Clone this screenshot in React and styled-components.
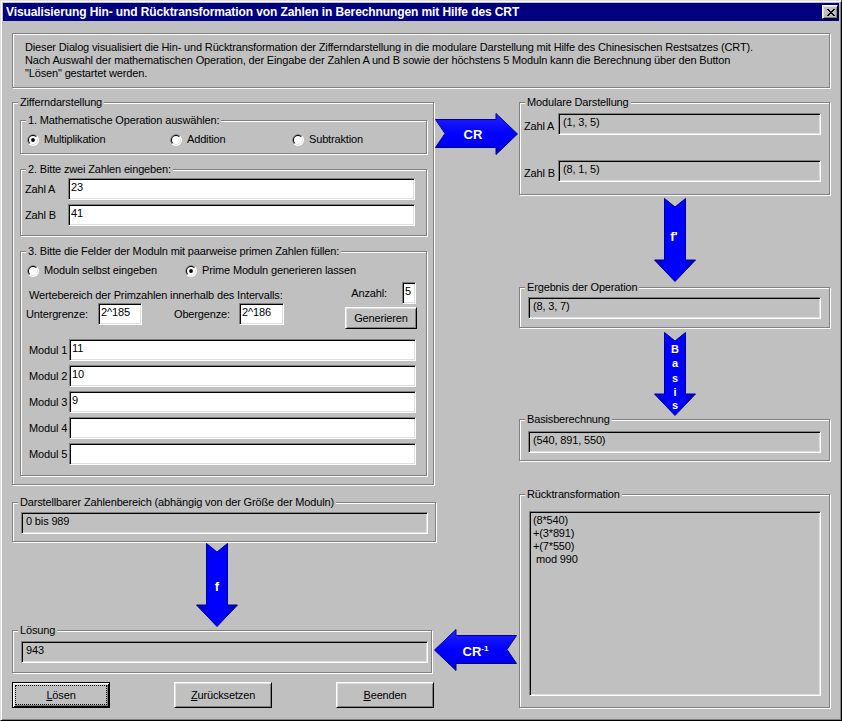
import React from "react";
import styled, { createGlobalStyle, css } from "styled-components";

const FONT = `"Liberation Sans", Arial, "DejaVu Sans", sans-serif`;

const GlobalStyle = createGlobalStyle`
  *, *::before, *::after { box-sizing: border-box; }
  html, body { margin: 0; padding: 0; background: #c0c0c0; }
  body {
    font-family: ${FONT};
    font-size: 11px;
    line-height: 13px;
    letter-spacing: -0.15px;
    color: #000;
  }
`;

const etched = css`
  border: 1px solid #808080;
  box-shadow: 1px 1px 0 #fff, inset 1px 1px 0 #fff;
`;

const sunken = css`
  border: 1px solid;
  border-color: #808080 #fff #fff #808080;
  box-shadow: inset 1px 1px 0 #000, inset -1px -1px 0 #dfdfdf;
`;

const Window = styled.div`
  width: 842px;
  height: 721px;
  display: flex;
  flex-direction: column;
  background: #c0c0c0;
  padding: 2px;
  border: 1px solid;
  border-color: #dfdfdf #000 #000 #dfdfdf;
  box-shadow: inset 1px 1px 0 #fff, inset -1px -1px 0 #808080;
`;

const TitleBar = styled.div`
  flex: none;
  height: 18px;
  display: flex;
  align-items: center;
  justify-content: space-between;
  background: #000080;
  color: #fff;
  padding: 0 1px 0 3px;
`;

const TitleText = styled.span`
  font-weight: bold;
  font-size: 12px;
  letter-spacing: -0.1px;
  white-space: nowrap;
`;

const CloseButton = styled.button`
  width: 16px;
  height: 14px;
  margin: 0;
  padding: 0 0 0 1px;
  display: flex;
  align-items: center;
  justify-content: center;
  background: #c0c0c0;
  border: 1px solid;
  border-color: #fff #000 #000 #fff;
  box-shadow: inset 1px 1px 0 #dfdfdf, inset -1px -1px 0 #808080;
`;

const Body = styled.div`
  flex: 1;
  display: flex;
  flex-direction: column;
  padding: 12px 9px 0;
`;

const InfoBox = styled.div`
  ${etched};
  height: 55px;
  padding: 7px 12px;
  white-space: nowrap;
`;

const Main = styled.div`
  display: flex;
  align-items: flex-start;
  margin-top: 8px;
`;

const LeftCol = styled.div`
  width: 422px;
  flex: none;
  display: flex;
  flex-direction: column;
  align-items: flex-start;
`;

const RightCol = styled.div`
  flex: none;
  display: grid;
  grid-template-columns: 85px 311px;
  grid-template-areas:
    "cr mod"
    ". f1"
    ". erg"
    ". f2"
    ". bas"
    "inv rueck";
  align-items: start;
`;

const Group = styled.fieldset`
  ${etched};
  margin: 0;
  margin-top: ${(p) => p.$mt || 0}px;
  padding: 0;
  min-width: 0;
  width: ${(p) => (p.$w ? `${p.$w}px` : "auto")};
  grid-area: ${(p) => p.$area || "auto"};
`;

const Legend = styled.legend`
  padding: 0 2px;
  margin-left: 5px;
  line-height: 13px;
  background: #c0c0c0;
  white-space: nowrap;
`;

const GroupBody = styled.div`
  display: flex;
  flex-direction: column;
  gap: ${(p) => p.$gap || 0}px;
  padding: ${(p) => p.$pad};
`;

const RadioRow = styled.div`
  display: grid;
  grid-template-columns: ${(p) => p.$cols};
  padding-left: ${(p) => p.$indent || 0}px;
`;

const RadioLabel = styled.label`
  display: inline-flex;
  align-items: center;
  gap: 5px;
  height: 13px;
  white-space: nowrap;
`;

const FormRow = styled.div`
  display: grid;
  grid-template-columns: ${(p) => p.$label}px auto;
  align-items: center;
  padding-left: ${(p) => p.$indent || 0}px;
`;

const FieldLabel = styled.span`
  white-space: nowrap;
  padding-top: ${(p) => p.$dy || 0}px;
`;

const TextInput = styled.input`
  ${sunken};
  width: ${(p) => p.$w}px;
  height: 22px;
  margin: 0;
  padding: 1px 2px 6px;
  font: inherit;
  letter-spacing: inherit;
  line-height: 13px;
  color: #000;
  background: #fff;
  outline: none;
`;

const ValueField = styled.div`
  ${sunken};
  width: ${(p) => p.$w}px;
  height: 22px;
  padding: 2px 4px 0;
  background: #c0c0c0;
  white-space: pre;
  overflow: hidden;
`;

const MultiLineField = styled(ValueField)`
  height: ${(p) => p.$h}px;
  padding: 2px 3px;
`;

const RangeBlock = styled.div`
  display: flex;
  justify-content: space-between;
  margin-top: 5px;
`;

const RangeLeft = styled.div`
  display: flex;
  flex-direction: column;
`;

const HintText = styled.div`
  margin-top: 7px;
  padding-left: 3px;
  white-space: nowrap;
`;

const BoundsRow = styled.div`
  display: flex;
  align-items: center;
  margin-top: 1px;
`;

const BoundLabel = styled.span`
  width: ${(p) => p.$w}px;
  margin-left: ${(p) => p.$ml || 0}px;
  white-space: nowrap;
`;

const RangeRight = styled.div`
  width: 72px;
  display: flex;
  flex-direction: column;
  align-items: flex-end;
  gap: 3px;
`;

const CountRow = styled.div`
  display: flex;
  align-items: center;
  gap: 15px;
  padding-right: 1px;
`;

const ModulList = styled.div`
  display: flex;
  flex-direction: column;
  gap: 4px;
  margin-top: 10px;
`;

const PushButton = styled.button`
  width: ${(p) => p.$w}px;
  height: ${(p) => p.$h}px;
  margin: 0;
  padding: 0;
  font: inherit;
  letter-spacing: inherit;
  color: #000;
  background: #c0c0c0;
  border: 1px solid;
  border-color: #fff #000 #000 #fff;
  box-shadow: inset 1px 1px 0 #dfdfdf, inset -1px -1px 0 #808080;
  ${(p) =>
    p.$default &&
    css`
      border-color: #000;
      box-shadow: inset 1px 1px 0 #fff, inset -1px -1px 0 #000,
        inset 2px 2px 0 #dfdfdf, inset -2px -2px 0 #808080;
      outline: 1px dotted #000;
      outline-offset: -4px;
    `}
`;

const ButtonRow = styled.div`
  width: 422px;
  display: flex;
  justify-content: space-between;
  margin-top: 9px;
`;

const ArrowSlot = styled.div`
  display: block;
  line-height: 0;
  grid-area: ${(p) => p.$area || "auto"};
  justify-self: ${(p) => p.$justify || "start"};
  align-self: ${(p) => p.$align || "start"};
  margin: ${(p) => p.$margin || 0};
`;

const ArrowText = styled.text`
  fill: #fff;
  font-family: ${FONT};
  font-weight: bold;
  letter-spacing: 0;
`;

function Radio({ checked, children }) {
  const d = (r) =>
    `M ${6 - r * 0.7071} ${6 + r * 0.7071} A ${r} ${r} 0 0 1 ${6 + r * 0.7071} ${6 - r * 0.7071} Z`;
  return (
    <RadioLabel>
      <svg width="12" height="12" viewBox="0 0 12 12" aria-hidden="true">
        <circle cx="6" cy="6" r="6" fill="#fff" />
        <path d={d(6)} fill="#808080" />
        <circle cx="6" cy="6" r="5" fill="#dfdfdf" />
        <path d={d(5)} fill="#000" />
        <circle cx="6" cy="6" r="4" fill="#fff" />
        {checked && <circle cx="6" cy="6" r="1.9" fill="#000" />}
      </svg>
      <span>{children}</span>
    </RadioLabel>
  );
}

function HArrow({ left, id, children }) {
  const pts = left
    ? "82.5,6.5 22,6.5 22,0.5 0.5,21 22,41.5 22,34.5 82.5,34.5 73,20.5"
    : "0.5,6.5 61,6.5 61,0.5 82.5,21 61,41.5 61,34.5 0.5,34.5 10,20.5";
  return (
    <svg width="83" height="42" viewBox="0 0 83 42">
      <defs>
        <linearGradient id={id} x1="0" y1="0" x2="0" y2="1">
          <stop offset="0" stopColor="#2323ff" />
          <stop offset="0.5" stopColor="#0000ff" />
          <stop offset="0.8" stopColor="#0000f0" />
          <stop offset="1" stopColor="#0000a8" />
        </linearGradient>
      </defs>
      <polygon points={pts} fill={`url(#${id})`} stroke="#000090" strokeWidth="1" />
      {children}
    </svg>
  );
}

function VArrow({ id, children }) {
  return (
    <svg width="42" height="84" viewBox="0 0 42 84">
      <defs>
        <linearGradient id={id} x1="0" y1="0" x2="1" y2="0">
          <stop offset="0" stopColor="#0000b8" />
          <stop offset="0.3" stopColor="#0000ff" />
          <stop offset="0.7" stopColor="#0000ff" />
          <stop offset="1" stopColor="#0000a8" />
        </linearGradient>
      </defs>
      <polygon
        points="10.5,0.5 21,9 31.5,0.5 31.5,62 41.5,62 21,83.5 0.5,62 10.5,62"
        fill={`url(#${id})`}
        stroke="#000090"
        strokeWidth="1"
      />
      {children}
    </svg>
  );
}

function CloseGlyph() {
  const px = [
    [0, 0], [1, 0], [6, 0], [7, 0],
    [1, 1], [2, 1], [5, 1], [6, 1],
    [2, 2], [3, 2], [4, 2], [5, 2],
    [3, 3], [4, 3],
    [2, 4], [3, 4], [4, 4], [5, 4],
    [1, 5], [2, 5], [5, 5], [6, 5],
    [0, 6], [1, 6], [6, 6], [7, 6],
  ];
  return (
    <svg width="8" height="7" viewBox="0 0 8 7" shapeRendering="crispEdges">
      {px.map(([x, y]) => (
        <rect key={`${x}-${y}`} x={x} y={y} width="1" height="1" fill="#000" />
      ))}
    </svg>
  );
}

export default function App() {
  const moduls = ["11", "10", "9", "", ""];
  return (
    <>
      <GlobalStyle />
      <Window>
        <TitleBar>
          <TitleText>
            Visualisierung Hin- und Rücktransformation von Zahlen in Berechnungen mit Hilfe des CRT
          </TitleText>
          <CloseButton aria-label="Schließen">
            <CloseGlyph />
          </CloseButton>
        </TitleBar>
        <Body>
          <InfoBox>
            <div>
              Dieser Dialog visualisiert die Hin- und Rücktransformation der Zifferndarstellung in die modulare Darstellung mit Hilfe des Chinesischen Restsatzes (CRT).
            </div>
            <div>
              Nach Auswahl der mathematischen Operation, der Eingabe der Zahlen A und B sowie der höchstens 5 Moduln kann die Berechnung über den Button
            </div>
            <div>"Lösen" gestartet werden.</div>
          </InfoBox>

          <Main>
            <LeftCol>
              <Group $w={422}>
                <Legend>Zifferndarstellung</Legend>
                <GroupBody $pad="5px 6px 8px 7px" $gap={9}>
                  <Group>
                    <Legend>1. Mathematische Operation auswählen:</Legend>
                    <GroupBody $pad="6px 0 7px 6px">
                      <RadioRow $cols="143px 122px auto">
                        <Radio checked>Multiplikation</Radio>
                        <Radio>Addition</Radio>
                        <Radio>Subtraktion</Radio>
                      </RadioRow>
                    </GroupBody>
                  </Group>

                  <Group>
                    <Legend>2. Bitte zwei Zahlen eingeben:</Legend>
                    <GroupBody $pad="2px 0 9px 4px" $gap={4}>
                      <FormRow $label={43}>
                        <FieldLabel $dy={1}>Zahl A</FieldLabel>
                        <TextInput $w={347} defaultValue="23" />
                      </FormRow>
                      <FormRow $label={43}>
                        <FieldLabel $dy={1}>Zahl B</FieldLabel>
                        <TextInput $w={347} defaultValue="41" />
                      </FormRow>
                    </GroupBody>
                  </Group>

                  <Group>
                    <Legend>3. Bitte die Felder der Moduln mit paarweise primen Zahlen füllen:</Legend>
                    <GroupBody $pad="6px 9px 10px 5px">
                      <RadioRow $cols="158px auto" $indent={1}>
                        <Radio>Moduln selbst eingeben</Radio>
                        <Radio checked>Prime Moduln generieren lassen</Radio>
                      </RadioRow>
                      <RangeBlock>
                        <RangeLeft>
                          <HintText>Wertebereich der Primzahlen innerhalb des Intervalls:</HintText>
                          <BoundsRow>
                            <BoundLabel $w={72}>Untergrenze:</BoundLabel>
                            <TextInput $w={44} defaultValue="2^185" />
                            <BoundLabel $w={65} $ml={32}>Obergenze:</BoundLabel>
                            <TextInput $w={45} defaultValue="2^186" />
                          </BoundsRow>
                        </RangeLeft>
                        <RangeRight>
                          <CountRow>
                            <FieldLabel>Anzahl:</FieldLabel>
                            <TextInput $w={14} defaultValue="5" />
                          </CountRow>
                          <PushButton $w={72} $h={22}>Generieren</PushButton>
                        </RangeRight>
                      </RangeBlock>
                      <ModulList>
                        {moduls.map((m, i) => (
                          <FormRow key={i} $label={40} $indent={3}>
                            <FieldLabel>Modul {i + 1}</FieldLabel>
                            <TextInput $w={347} defaultValue={m} />
                          </FormRow>
                        ))}
                      </ModulList>
                    </GroupBody>
                  </Group>
                </GroupBody>
              </Group>

              <Group $w={424} $mt={11}>
                <Legend>Darstellbarer Zahlenbereich (abhängig von der Größe der Moduln)</Legend>
                <GroupBody $pad="3px 8px 7px 8px">
                  <ValueField $w={407}>0 bis 989</ValueField>
                </GroupBody>
              </Group>

              <ArrowSlot $margin="1px 0 -3px 184px">
                <VArrow id="gf">
                  <ArrowText x="21" y="48" fontSize="13" textAnchor="middle">f</ArrowText>
                </VArrow>
              </ArrowSlot>

              <Group $w={420}>
                <Legend>Lösung</Legend>
                <GroupBody $pad="4px 8px 9px 8px">
                  <ValueField $w={407}>943</ValueField>
                </GroupBody>
              </Group>

              <ButtonRow>
                <PushButton $w={98} $h={26} $default>
                  <u>L</u>ösen
                </PushButton>
                <PushButton $w={98} $h={26}>
                  <u>Z</u>urücksetzen
                </PushButton>
                <PushButton $w={98} $h={26}>
                  <u>B</u>eenden
                </PushButton>
              </ButtonRow>
            </LeftCol>

            <RightCol>
              <ArrowSlot $area="cr" $margin="17px 0 0 1px">
                <HArrow id="gcr">
                  <ArrowText x="38" y="25.5" fontSize="13" textAnchor="middle">CR</ArrowText>
                </HArrow>
              </ArrowSlot>

              <Group $area="mod">
                <Legend>Modulare Darstellung</Legend>
                <GroupBody $pad="4px 8px 12px 4px" $gap={25}>
                  <FormRow $label={34}>
                    <FieldLabel $dy={5}>Zahl A</FieldLabel>
                    <ValueField $w={263}>(1, 3, 5)</ValueField>
                  </FormRow>
                  <FormRow $label={34}>
                    <FieldLabel $dy={5}>Zahl B</FieldLabel>
                    <ValueField $w={263}>(8, 1, 5)</ValueField>
                  </FormRow>
                </GroupBody>
              </Group>

              <ArrowSlot $area="f1" $justify="center" $margin="3px 0 -1px 0">
                <VArrow id="gf1">
                  <ArrowText x="20" y="43" fontSize="13" textAnchor="middle">f'</ArrowText>
                </VArrow>
              </ArrowSlot>

              <Group $area="erg">
                <Legend>Ergebnis der Operation</Legend>
                <GroupBody $pad="3px 8px 8px 8px">
                  <ValueField $w={293}>(8, 3, 7)</ValueField>
                </GroupBody>
              </Group>

              <ArrowSlot $area="f2" $justify="center" $margin="4px 0 -3px 0">
                <VArrow id="gf2">
                  <ArrowText x="21" y="21" fontSize="11" textAnchor="middle">B</ArrowText>
                  <ArrowText x="21" y="35" fontSize="11" textAnchor="middle">a</ArrowText>
                  <ArrowText x="21" y="50" fontSize="11" textAnchor="middle">s</ArrowText>
                  <ArrowText x="21" y="64" fontSize="11" textAnchor="middle">i</ArrowText>
                  <ArrowText x="21" y="77" fontSize="11" textAnchor="middle">s</ArrowText>
                </VArrow>
              </ArrowSlot>

              <Group $area="bas">
                <Legend>Basisberechnung</Legend>
                <GroupBody $pad="5px 8px 7px 8px">
                  <ValueField $w={293}>(540, 891, 550)</ValueField>
                </GroupBody>
              </Group>

              <ArrowSlot $area="inv" $align="end" $margin="0 0 37px 0">
                <HArrow left id="gcri">
                  <ArrowText x="28.5" y="27" fontSize="13">
                    CR
                    <tspan dy="-5" fontSize="8">-1</tspan>
                  </ArrowText>
                </HArrow>
              </ArrowSlot>

              <Group $area="rueck" $mt={27}>
                <Legend>Rücktransformation</Legend>
                <GroupBody $pad="10px 8px 11px 9px">
                  <MultiLineField $w={292} $h={185}>
                    {"(8*540)\n+(3*891)\n+(7*550)\n mod 990"}
                  </MultiLineField>
                </GroupBody>
              </Group>
            </RightCol>
          </Main>
        </Body>
      </Window>
    </>
  );
}
